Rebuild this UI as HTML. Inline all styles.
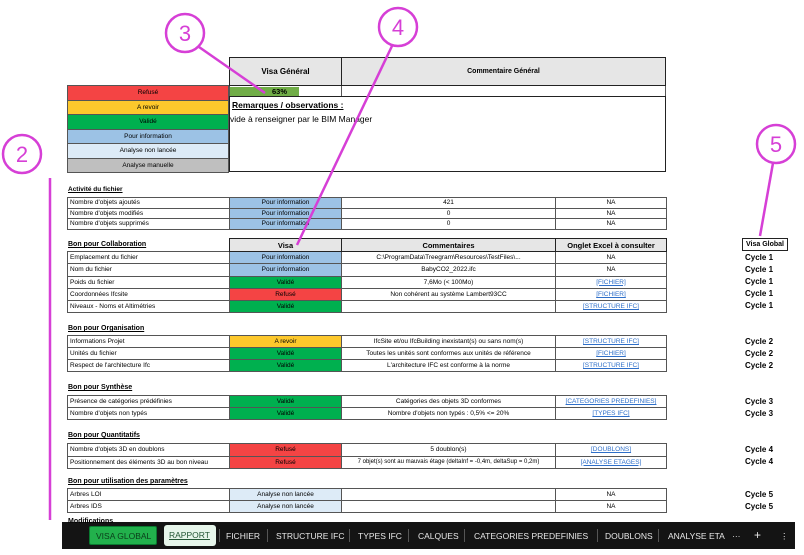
<!DOCTYPE html>
<html><head><meta charset="utf-8"><style>
*{margin:0;padding:0;box-sizing:border-box}
body{width:804px;height:555px;background:#fff;position:relative;overflow:hidden;font-family:"Liberation Sans",sans-serif;color:#000}
table{position:absolute;left:67px;border-collapse:collapse;table-layout:fixed;font-size:6.5px}
td{border:1px solid #555;text-align:center;vertical-align:middle;white-space:nowrap;overflow:hidden;padding:0 2px;line-height:7px}
td.l{text-align:left}
.r{background:#f44444}.y{background:#fdc82c}.g{background:#00b04f}.b{background:#9cc2e5}.lb{background:#ddebf7}.gr{background:#bfbfbf}
.lk{color:#2e6fc9;text-decoration:underline}
.t{position:absolute;left:68px;font-size:7px;font-weight:bold;text-decoration:underline;z-index:2}
.h td{background:#e6e6e6;font-weight:bold;font-size:7.5px;border:1px solid #222}
.c{position:absolute;left:745px;font-size:8px;font-weight:bold}
.tab{position:absolute;left:62px;top:522px;width:733px;height:27px;background:#141414;color:#e8e8e8;font-size:8.5px}
.tab span{position:absolute;top:9px;white-space:nowrap}
.sep{position:absolute;top:7px;width:1px;height:13px;background:#555}
</style></head><body>

<table style="top:57px;left:229px;width:437px">
<tr class="h"><td style="width:112px;height:28px;font-size:8px">Visa Général</td><td style="font-size:7px">Commentaire Général</td></tr>
<tr><td style="height:11px;text-align:left;padding:0"><div style="width:69px;height:9px;background:#70ad47;font-weight:bold;font-size:7.5px;text-align:center;line-height:9px;padding-left:30px">63%</div></td><td></td></tr>
</table>
<div style="position:absolute;left:229px;top:96px;width:437px;height:76px;border:1.5px solid #222"></div>
<div style="position:absolute;left:232px;top:100px;font-size:8.5px;font-weight:bold;text-decoration:underline">Remarques / observations :</div>
<div style="position:absolute;left:230px;top:114px;font-size:8.5px">vide à renseigner par le BIM Manager</div>
<table style="top:85px;width:162px">
<tr><td class="r" style="height:14.5px">Refusé</td></tr>
<tr><td class="y" style="height:14.5px">A revoir</td></tr>
<tr><td class="g" style="height:14.5px">Validé</td></tr>
<tr><td class="b" style="height:14.5px">Pour information</td></tr>
<tr><td class="lb" style="height:14.5px">Analyse non lancée</td></tr>
<tr><td class="gr" style="height:14.5px">Analyse manuelle</td></tr>
</table>

<div class="t" style="top:186px;font-size:6.5px">Activité du fichier</div>
<table style="top:197px;width:599px">
<colgroup><col style="width:162px"><col style="width:112px"><col style="width:214px"><col style="width:111px"></colgroup>
<tr><td class="l" style="height:10.5px">Nombre d'objets ajoutés</td><td class="b">Pour information</td><td>421</td><td>NA</td></tr>
<tr><td class="l" style="height:10.5px">Nombre d'objets modifiés</td><td class="b">Pour information</td><td>0</td><td>NA</td></tr>
<tr><td class="l" style="height:10.5px">Nombre d'objets supprimés</td><td class="b">Pour information</td><td>0</td><td>NA</td></tr>
</table>

<div class="t" style="top:241px">Bon pour Collaboration</div>
<table style="top:238px;width:599px">
<colgroup><col style="width:162px"><col style="width:112px"><col style="width:214px"><col style="width:111px"></colgroup>
<tr class="h"><td style="border:none;background:transparent;height:13px"></td><td>Visa</td><td>Commentaires</td><td>Onglet Excel à consulter</td></tr>
<tr><td class="l" style="height:12.3px">Emplacement du fichier</td><td class="b">Pour information</td><td>C:\ProgramData\Treegram\Resources\TestFiles\...</td><td>NA</td></tr>
<tr><td class="l" style="height:12.3px">Nom du fichier</td><td class="b">Pour information</td><td>BabyCO2_2022.ifc</td><td>NA</td></tr>
<tr><td class="l" style="height:12.3px">Poids du fichier</td><td class="g">Validé</td><td>7,6Mo (&lt; 100Mo)</td><td class="lk">[FICHIER]</td></tr>
<tr><td class="l" style="height:12.3px">Coordonnées Ifcsite</td><td class="r">Refusé</td><td>Non cohérent au système Lambert93CC</td><td class="lk">[FICHIER]</td></tr>
<tr><td class="l" style="height:12.3px">Niveaux - Noms et Altimétries</td><td class="g">Validé</td><td></td><td class="lk">[STRUCTURE IFC]</td></tr>
</table>

<div class="t" style="top:325px">Bon pour Organisation</div>
<table style="top:335px;width:599px">
<colgroup><col style="width:162px"><col style="width:112px"><col style="width:214px"><col style="width:111px"></colgroup>
<tr><td class="l" style="height:12px">Informations Projet</td><td class="y">A revoir</td><td>IfcSite et/ou IfcBuilding inexistant(s) ou sans nom(s)</td><td class="lk">[STRUCTURE IFC]</td></tr>
<tr><td class="l" style="height:12px">Unités du fichier</td><td class="g">Validé</td><td>Toutes les unités sont conformes aux unités de référence</td><td class="lk">[FICHIER]</td></tr>
<tr><td class="l" style="height:12px">Respect de l'architecture Ifc</td><td class="g">Validé</td><td>L'architecture IFC est conforme à la norme</td><td class="lk">[STRUCTURE IFC]</td></tr>
</table>

<div class="t" style="top:384px">Bon pour Synthèse</div>
<table style="top:395px;width:599px">
<colgroup><col style="width:162px"><col style="width:112px"><col style="width:214px"><col style="width:111px"></colgroup>
<tr><td class="l" style="height:12px">Présence de catégories prédéfinies</td><td class="g">Validé</td><td>Catégories des objets 3D conformes</td><td class="lk">[CATEGORIES PREDEFINIES]</td></tr>
<tr><td class="l" style="height:12px">Nombre d'objets non typés</td><td class="g">Validé</td><td>Nombre d'objets non typés : 0,5% &lt;= 20%</td><td class="lk">[TYPES IFC]</td></tr>
</table>

<div class="t" style="top:432px">Bon pour Quantitatifs</div>
<table style="top:443px;width:599px">
<colgroup><col style="width:162px"><col style="width:112px"><col style="width:214px"><col style="width:111px"></colgroup>
<tr><td class="l" style="height:12.5px">Nombre d'objets 3D en doublons</td><td class="r">Refusé</td><td>5 doublon(s)</td><td class="lk">[DOUBLONS]</td></tr>
<tr><td class="l" style="height:12.5px">Positionnement des éléments 3D au bon niveau</td><td class="r">Refusé</td><td style="font-size:6px">7 objet(s) sont au mauvais étage (deltaInf = -0,4m, deltaSup = 0,2m)</td><td class="lk">[ANALYSE ETAGES]</td></tr>
</table>

<div class="t" style="top:478px">Bon pour utilisation des paramètres</div>
<table style="top:488px;width:599px">
<colgroup><col style="width:162px"><col style="width:112px"><col style="width:214px"><col style="width:111px"></colgroup>
<tr><td class="l" style="height:12px">Arbres LOI</td><td class="lb">Analyse non lancée</td><td></td><td>NA</td></tr>
<tr><td class="l" style="height:12px">Arbres IDS</td><td class="lb">Analyse non lancée</td><td></td><td>NA</td></tr>
</table>
<div class="t" style="top:518px;text-decoration:none">Modifications</div>

<div style="position:absolute;left:742px;top:238px;width:46px;height:13px;border:1px solid #222;font-size:7px;font-weight:bold;text-align:center;line-height:11px">Visa Global</div>
<div class="c" style="top:253px">Cycle 1</div><div class="c" style="top:265px">Cycle 1</div><div class="c" style="top:277px">Cycle 1</div><div class="c" style="top:289px">Cycle 1</div><div class="c" style="top:301px">Cycle 1</div>
<div class="c" style="top:337px">Cycle 2</div><div class="c" style="top:349px">Cycle 2</div><div class="c" style="top:361px">Cycle 2</div>
<div class="c" style="top:397px">Cycle 3</div><div class="c" style="top:409px">Cycle 3</div>
<div class="c" style="top:445px">Cycle 4</div><div class="c" style="top:457px">Cycle 4</div>
<div class="c" style="top:490px">Cycle 5</div><div class="c" style="top:502px">Cycle 5</div>

<div class="tab">
<div style="position:absolute;left:27px;top:4px;width:68px;height:19px;background:#22b14c;border-radius:2px;border:1px solid #0a7a30"></div>
<span style="left:34px;color:#0b3d1a">VISA GLOBAL</span>
<div style="position:absolute;left:102px;top:3px;width:52px;height:21px;background:#e6f5ea;border-radius:3px"></div>
<span style="left:107px;top:8px;color:#225533;text-decoration:underline">RAPPORT</span>
<div class="sep" style="left:157px"></div>
<span style="left:164px">FICHIER</span><div class="sep" style="left:205px"></div>
<span style="left:214px">STRUCTURE IFC</span><div class="sep" style="left:287px"></div>
<span style="left:296px">TYPES IFC</span><div class="sep" style="left:346px"></div>
<span style="left:356px">CALQUES</span><div class="sep" style="left:402px"></div>
<span style="left:412px">CATEGORIES PREDEFINIES</span><div class="sep" style="left:535px"></div>
<span style="left:543px">DOUBLONS</span><div class="sep" style="left:596px"></div>
<span style="left:606px">ANALYSE ETA</span>
<span style="left:670px">···</span><span style="left:692px;top:6px;font-size:12px">+</span><span style="left:718px">⋮</span>
</div>

<svg width="804" height="555" style="position:absolute;left:0;top:0" fill="none" stroke="#d63fd6" stroke-width="2.5">
<circle cx="185" cy="33" r="19"/><line x1="199" y1="47" x2="265" y2="93"/>
<circle cx="398" cy="27" r="19"/><line x1="392" y1="46" x2="297" y2="245"/>
<circle cx="776" cy="144" r="19"/><line x1="773" y1="163" x2="760" y2="236"/>
<circle cx="22" cy="154" r="19"/><line x1="50" y1="178" x2="50" y2="520"/>
<g fill="#d63fd6" stroke="none" font-family="Liberation Sans" font-size="22" text-anchor="middle">
<text x="185" y="41">3</text><text x="398" y="35">4</text><text x="776" y="152">5</text><text x="22" y="162">2</text></g>
</svg>
</body></html>
